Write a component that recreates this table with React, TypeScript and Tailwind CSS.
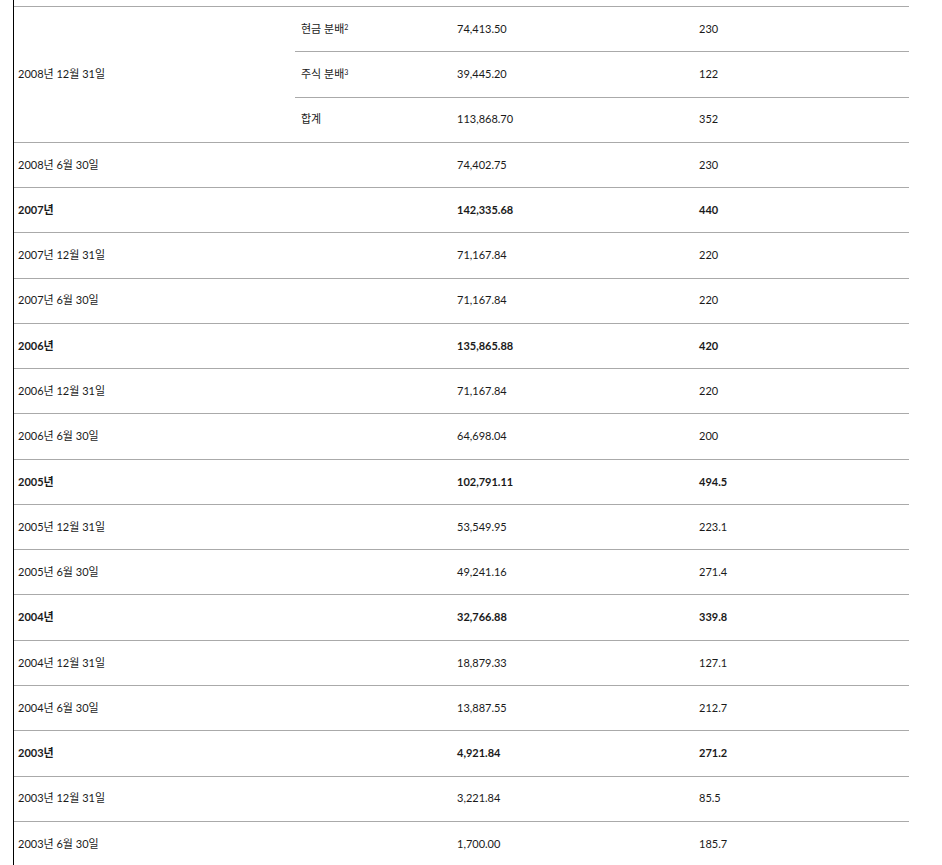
import React from "react";

type Row = { a: string; b: string; c: string; bold?: boolean };

const rows: Row[] = [
  { a: "2008년 6월 30일", b: "74,402.75", c: "230" },
  { a: "2007년", b: "142,335.68", c: "440", bold: true },
  { a: "2007년 12월 31일", b: "71,167.84", c: "220" },
  { a: "2007년 6월 30일", b: "71,167.84", c: "220" },
  { a: "2006년", b: "135,865.88", c: "420", bold: true },
  { a: "2006년 12월 31일", b: "71,167.84", c: "220" },
  { a: "2006년 6월 30일", b: "64,698.04", c: "200" },
  { a: "2005년", b: "102,791.11", c: "494.5", bold: true },
  { a: "2005년 12월 31일", b: "53,549.95", c: "223.1" },
  { a: "2005년 6월 30일", b: "49,241.16", c: "271.4" },
  { a: "2004년", b: "32,766.88", c: "339.8", bold: true },
  { a: "2004년 12월 31일", b: "18,879.33", c: "127.1" },
  { a: "2004년 6월 30일", b: "13,887.55", c: "212.7" },
  { a: "2003년", b: "4,921.84", c: "271.2", bold: true },
  { a: "2003년 12월 31일", b: "3,221.84", c: "85.5" },
  { a: "2003년 6월 30일", b: "1,700.00", c: "185.7" },
];

const sub = [
  { l: "현금 분배", s: "2", b: "74,413.50", c: "230" },
  { l: "주식 분배", s: "3", b: "39,445.20", c: "122" },
  { l: "합계", s: "", b: "113,868.70", c: "352" },
];

export default function App() {
  return (
    <div
      className="w-[942px] h-[865px] overflow-hidden bg-white text-[11px] text-[#1a1a1a]"
      style={{ fontFamily: '"Lato", "Noto Sans CJK KR", sans-serif' }}
    >
      <div className="ml-[13px] w-[896px] border-l border-black">
        <div className="h-[6px]" />
        <div className="flex border-t border-[#aaa]">
          <div className="w-[281px] flex items-center pl-[4px]">2008년 12월 31일</div>
          <div className="flex-1 flex flex-col">
            {sub.map((r, i) => (
              <div
                key={i}
                className={`flex items-center ${i > 0 ? "h-[45.28px] border-t border-[#aaa]" : "h-[44.28px]"}`}
              >
                <div className="w-[156px] pl-[6px]">
                  {r.l}
                  {r.s && <span className="relative -top-[3px] text-[7px]">{r.s}</span>}
                </div>
                <div className="w-[242px] pl-[6px]">{r.b}</div>
                <div className="flex-1 pl-[6px]">{r.c}</div>
              </div>
            ))}
          </div>
        </div>
        {rows.map((r, i) => (
          <div
            key={i}
            className={`h-[45.28px] flex items-center border-t border-[#aaa] ${r.bold ? "font-bold" : ""}`}
          >
            <div className="w-[281px] pl-[4px]">{r.a}</div>
            <div className="w-[156px]" />
            <div className="w-[242px] pl-[6px]">{r.b}</div>
            <div className="flex-1 pl-[6px]">{r.c}</div>
          </div>
        ))}
      </div>
    </div>
  );
}
